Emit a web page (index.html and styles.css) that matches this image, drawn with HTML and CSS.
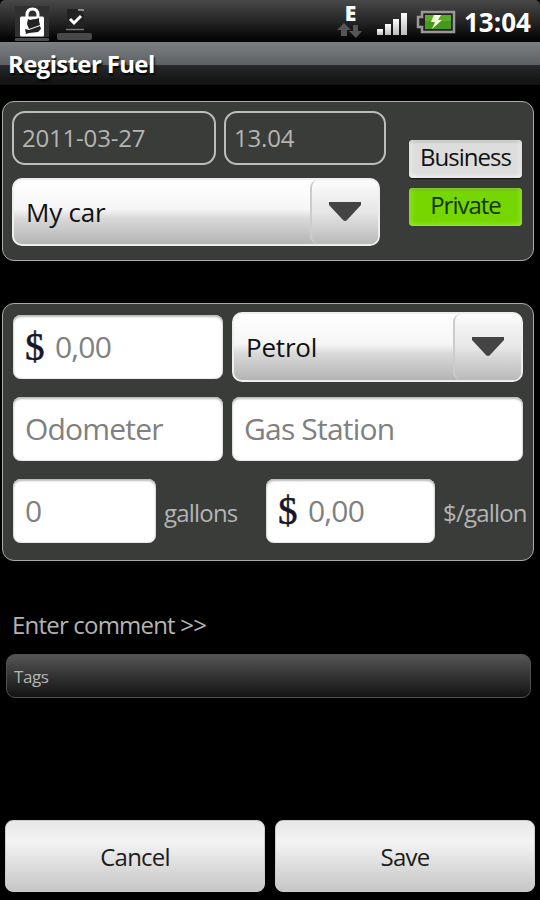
FILE: index.html
```html
<!DOCTYPE html>
<html lang="en">
<head>
  <meta charset="UTF-8">
  <title>Register Fuel</title>
  <link rel="stylesheet" href="styles.css">
</head>
<body>
  <div class="status-bar">
    <svg class="notifications" width="110" height="42" viewBox="0 0 110 42">
      <rect x="15" y="6" width="34" height="31" fill="#303030"/>
      <rect x="15" y="38" width="34" height="3" rx="1" fill="#4a4a4a"/>
      <path d="M27 17v-2q0-6 5.500-6t5.500 6v2" fill="none" stroke="#fff" stroke-width="3"/>
      <path d="M21.500 18h21v17h-21z" fill="#fff" stroke="#fff" stroke-width="3" stroke-linejoin="round"/>
      <path d="M28 19l2 1q3-1 6-1l3-1v3l1 4-11 4-2-5z" fill="#222"/>
      <path d="M25 29l4 1 11-4 1 3-3 3-9 1-3 1z" fill="#222"/>
      <path d="M67 9h12l5 5v13H67z" fill="#222"/>
      <path d="M78 10h6" stroke="#888" stroke-width="2"/>
      <path d="M70 19l4 4 7-7" fill="none" stroke="#fff" stroke-width="3"/>
      <path d="M66 29.500h18" stroke="#777" stroke-width="1.500"/>
      <rect x="57" y="33" width="35" height="7" rx="2" fill="#484848"/>
    </svg>
    <div class="indicators">
      <div class="network">
        <span>E</span>
        <svg width="26" height="16" viewBox="0 0 26 16">
          <path d="M7 0l7 7h-4v6H4V7H0z" fill="#555"/>
          <path d="M16 2h5v6h4l-6 7-7-7h4z" fill="#555"/>
        </svg>
      </div>
      <svg class="signal" width="31" height="24" viewBox="0 0 31 24">
        <defs>
          <linearGradient id="bars" x2="0" y2="1">
            <stop offset="0" stop-color="#fff"/>
            <stop offset="1" stop-color="#bbb"/>
          </linearGradient>
        </defs>
        <g fill="url(#bars)">
          <rect x="0" y="17" width="6" height="6"/>
          <rect x="8" y="12" width="6" height="11"/>
          <rect x="16" y="7" width="6" height="16"/>
          <rect x="24" y="1" width="6" height="22"/>
        </g>
      </svg>
      <svg class="battery" width="40" height="24" viewBox="0 0 40 24">
        <path d="M6 2h32v20H6v-5H2V7h4z" fill="#222" stroke="#999" stroke-width="2.500"/>
        <rect x="9" y="5" width="26" height="14" fill="#47991b"/>
        <rect x="9" y="5" width="26" height="6" fill="#5bad28"/>
        <path d="M18 5h7l-3 5h4l-10 9 3-7h-4z" fill="#f4ffdc"/>
      </svg>
      <span class="clock">13:04</span>
    </div>
  </div>

  <h1 class="title">Register Fuel</h1>

  <div class="panel trip">
    <div class="trip-fields">
      <div class="date-row">
        <button class="outline date">2011-03-27</button>
        <button class="outline time">13.04</button>
      </div>
      <button class="spinner car">
        <span class="label">My car</span>
        <span class="arrow"><svg width="34" height="20" viewBox="0 0 34 20"><path d="M1 0h32v3L19 18q-2 2-4 0L1 3z" fill="#444"/></svg></span>
      </button>
    </div>
    <div class="trip-type">
      <button class="toggle">Business</button>
      <button class="toggle on">Private</button>
    </div>
  </div>

  <div class="panel fuel">
    <div class="row first">
      <label class="field cost"><span class="currency">$</span><input type="text" placeholder="0,00"></label>
      <button class="spinner petrol">
        <span class="label">Petrol</span>
        <span class="arrow"><svg width="34" height="20" viewBox="0 0 34 20"><path d="M1 0h32v3L19 18q-2 2-4 0L1 3z" fill="#444"/></svg></span>
      </button>
    </div>
    <div class="row">
      <label class="field odometer"><input type="text" placeholder="Odometer"></label>
      <label class="field station"><input type="text" placeholder="Gas Station"></label>
    </div>
    <div class="row">
      <label class="field volume"><input type="text" placeholder="0"></label>
      <span class="unit gallons">gallons</span>
      <label class="field price"><span class="currency">$</span><input type="text" placeholder="0,00"></label>
      <span class="unit">$/gallon</span>
    </div>
  </div>

  <div class="comment">Enter comment &gt;&gt;</div>
  <div class="tags">Tags</div>

  <div class="actions">
    <button>Cancel</button>
    <button>Save</button>
  </div>
</body>
</html>
```
FILE: styles.css
```css
:root {
  --panel: #3a3c3a;
  --line: #a9aba9;
  --text: #b4b4b4;
  --hint: #808080;
}

* {
  box-sizing: border-box;
}

body {
  margin: 0;
  width: 540px;
  height: 900px;
  overflow: hidden;
  background: #000;
  color: var(--text);
  font-family: "Open Sans", "Noto Sans", sans-serif;
  font-size: 24px;
  letter-spacing: -0.8px;
  display: flex;
  flex-direction: column;
}

button, input {
  font: inherit;
  letter-spacing: inherit;
  margin: 0;
  padding: 0;
  border: none;
}

.status-bar {
  height: 42px;
  flex: none;
  display: flex;
  justify-content: space-between;
  background: linear-gradient(#484848, #262626 50%, #050505 92%);
  border-radius: 5px 5px 0 0;
}

.indicators {
  display: flex;
  align-items: flex-start;
}

.network {
  width: 26px;
  display: flex;
  flex-direction: column;
  align-items: center;
  color: #fff;
  font-size: 21px;
  font-weight: 800;
  line-height: 19px;
  padding-top: 4px;
}

.signal {
  margin: 12px 0 0 14px;
}

.battery {
  margin: 10px 0 0 8px;
}

.clock {
  width: 76px;
  margin-left: 8px;
  color: #fff;
  font-size: 26px;
  font-weight: 700;
  line-height: 44px;
  letter-spacing: 0;
}

.title {
  margin: 0;
  height: 43px;
  flex: none;
  padding-left: 8px;
  color: #fff;
  font-size: 24px;
  font-weight: 700;
  line-height: 43px;
  letter-spacing: -0.65px;
  text-shadow: 1px 2px 2px #000;
  background: linear-gradient(#7d8082, #5e6163 23px, #27292a 23px, #111313 41px, #1e1f1f 42px, #000);
}

.panel {
  width: 532px;
  flex: none;
  margin-left: 2px;
  background: var(--panel);
  border: 1.5px solid var(--line);
  border-radius: 12px;
}

.trip {
  height: 160px;
  margin-top: 16px;
  padding: 9px 11px 0 9px;
  display: flex;
  justify-content: space-between;
}

.date-row {
  display: flex;
  gap: 8px;
}

.outline {
  height: 54px;
  padding: 0 0 2px 8px;
  text-align: left;
  color: var(--text);
  letter-spacing: -0.2px;
  background: var(--panel);
  border: 2px solid #bcbdbc;
  border-radius: 13px;
}

.date {
  width: 204px;
}

.time {
  width: 162px;
}

.spinner {
  display: flex;
  color: #111;
  font-size: 26px;
  letter-spacing: -0.2px;
  text-align: left;
  background: linear-gradient(#fff, #f6f6f6 45%, #d9d9d9 60%, #b4b4b4);
  border: 2px solid #eee;
  border-radius: 10px;
  overflow: hidden;
}

.spinner .label {
  flex: 1;
  align-self: center;
  padding-left: 12px;
}

.spinner .arrow {
  width: 68px;
  height: 100%;
  display: flex;
  align-items: center;
  justify-content: center;
  background: linear-gradient(#fcfcfc, #e6e6e6 50%, #b8b8b8);
  border-left: 2px solid #ccc;
  border-radius: 8px 0 0 8px;
}

.car {
  width: 368px;
  height: 68px;
  margin-top: 13px;
}

.trip-type {
  width: 113px;
  padding-top: 29px;
  display: flex;
  flex-direction: column;
  gap: 10px;
}

.toggle {
  height: 38px;
  color: #111;
  letter-spacing: -1px;
  line-height: 34px;
  padding-bottom: 4px;
  background: #ddd;
  border-radius: 4px;
  box-shadow: inset 0 0 5px 1px #fafafa, inset 0 2px 3px #888, 0 1px 1px #111;
}

.toggle.on {
  color: #123400;
  background: #76d600;
  box-shadow: inset 0 0 5px 1px #a2f044, inset 0 2px 3px #4a8500;
}

.fuel {
  height: 258px;
  margin-top: 42px;
  padding: 8px 0 0 10px;
}

.row {
  display: flex;
  align-items: center;
  margin-bottom: 18px;
}

.first {
  margin-bottom: 15px;
}

.field {
  height: 64px;
  display: flex;
  align-items: center;
  padding: 0 0 1px 12px;
  background: #fff;
  border-radius: 8px;
  box-shadow: inset 0 2px 2px #bbb, inset 0 0 2px #aaa;
}

.field input {
  flex: 1;
  min-width: 0;
  background: none;
  font-size: 30px;
  outline: none;
}

.field input::placeholder {
  color: var(--hint);
  opacity: 1;
}

.currency {
  width: 30px;
  flex: none;
  color: #15152a;
  font-family: "Liberation Serif", serif;
  font-size: 39px;
  -webkit-text-stroke: 0.5px #15152a;
}

.cost, .odometer {
  width: 210px;
  margin-right: 9px;
}

.petrol {
  width: 291px;
  height: 70px;
}

.station {
  width: 291px;
}

.volume {
  width: 143px;
}

.unit {
  margin-left: 8px;
  padding-top: 3px;
  white-space: nowrap;
}

.gallons {
  width: 94px;
}

.price {
  width: 169px;
  margin-left: 8px;
}

.comment {
  margin: 47px 0 0 12px;
  line-height: 34px;
}

.tags {
  width: 525px;
  height: 44px;
  flex: none;
  margin: 12px 0 0 6px;
  padding-left: 7px;
  font-size: 17px;
  letter-spacing: -0.4px;
  line-height: 43px;
  background: linear-gradient(#555, #333 50%, #131313);
  border: 1px solid #505050;
  border-radius: 9px;
}

.actions {
  display: flex;
  gap: 10px;
  margin: auto 5px 8px 5px;
}

.actions button {
  flex: 1;
  height: 72px;
  color: #1c1c1c;
  background: linear-gradient(#e8e8e8, #f3f3f3 30%, #dcdcdc 65%, #c6c6c6);
  border: 1px solid #ccc;
  border-radius: 8px;
}
```
